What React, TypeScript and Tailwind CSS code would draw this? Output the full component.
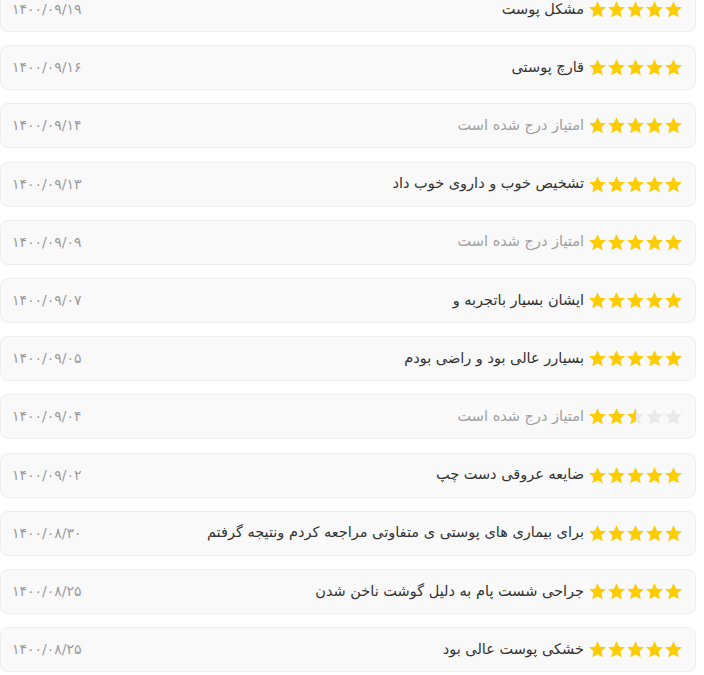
import React from "react";

interface Review {
  text: string;
  date: string;
  rating: number;
  empty?: boolean;
}

const reviews: Review[] = [
  { text: "مشکل پوست", date: "۱۴۰۰/۰۹/۱۹", rating: 5 },
  { text: "قارچ پوستی", date: "۱۴۰۰/۰۹/۱۶", rating: 5 },
  { text: "امتیاز درج شده است", date: "۱۴۰۰/۰۹/۱۴", rating: 5, empty: true },
  { text: "تشخیص خوب و داروی خوب داد", date: "۱۴۰۰/۰۹/۱۳", rating: 5 },
  { text: "امتیاز درج شده است", date: "۱۴۰۰/۰۹/۰۹", rating: 5, empty: true },
  { text: "ایشان بسیار باتجربه و", date: "۱۴۰۰/۰۹/۰۷", rating: 5 },
  { text: "بسیارر عالی بود و راضی بودم", date: "۱۴۰۰/۰۹/۰۵", rating: 5 },
  { text: "امتیاز درج شده است", date: "۱۴۰۰/۰۹/۰۴", rating: 2.5, empty: true },
  { text: "ضایعه عروقی دست چپ", date: "۱۴۰۰/۰۹/۰۲", rating: 5 },
  { text: "برای بیماری های پوستی ی متفاوتی مراجعه کردم ونتیجه گرفتم", date: "۱۴۰۰/۰۸/۳۰", rating: 5 },
  { text: "جراحی شست پام به دلیل گوشت ناخن شدن", date: "۱۴۰۰/۰۸/۲۵", rating: 5 },
  { text: "خشکی پوست عالی بود", date: "۱۴۰۰/۰۸/۲۵", rating: 5 },
];

const STAR = "M12 1.6l3.1 7 7.5.7-5.7 5 1.7 7.5L12 17.9l-6.6 3.9 1.7-7.5-5.7-5 7.5-.7z";

// one star, fill is 0..1, filled part from the left
function Star({ fill }: { fill: number }) {
  return (
    <span className="relative inline-block w-[19px] h-[19px]">
      <svg viewBox="0 0 24 24" className="absolute inset-0 w-[19px] h-[19px]">
        <path d={STAR} fill="#e9e9e9" />
      </svg>
      {fill > 0 && (
        <span
          className="absolute top-0 left-0 h-[19px] overflow-hidden"
          style={{ width: `${fill * 19}px` }}
        >
          <svg viewBox="0 0 24 24" className="absolute top-0 left-0 w-[19px] h-[19px]">
            <path d={STAR} fill="#ffcc00" />
          </svg>
        </span>
      )}
    </span>
  );
}

function Stars({ rating }: { rating: number }) {
  return (
    <div dir="ltr" className="flex items-center">
      {[0, 1, 2, 3, 4].map((i) => (
        <Star key={i} fill={Math.max(0, Math.min(1, rating - i))} />
      ))}
    </div>
  );
}

export default function App() {
  return (
    <div
      dir="rtl"
      className="w-[704px] h-[675px] overflow-hidden bg-white"
      style={{ fontFamily: '"DejaVu Sans", sans-serif' }}
    >
      <div className="-mt-[13px] mr-[8px] flex flex-col gap-[13.2px]">
        {reviews.map((r, idx) => (
          <div
            key={idx}
            className="h-[45px] flex items-center justify-between pr-[12px] pl-[11px] bg-[#f9f9f9] border border-[#eeeeee] rounded-lg"
          >
            <div className="flex items-center gap-[4px]">
              <Stars rating={r.rating} />
              <span className={`text-[14.5px] ${r.empty ? "text-[#a0a0a0]" : "text-[#333333]"}`}>
                {r.text}
              </span>
            </div>
            <span dir="ltr" className="text-[14px] text-[#9a9a9a]">
              {r.date}
            </span>
          </div>
        ))}
      </div>
    </div>
  );
}
